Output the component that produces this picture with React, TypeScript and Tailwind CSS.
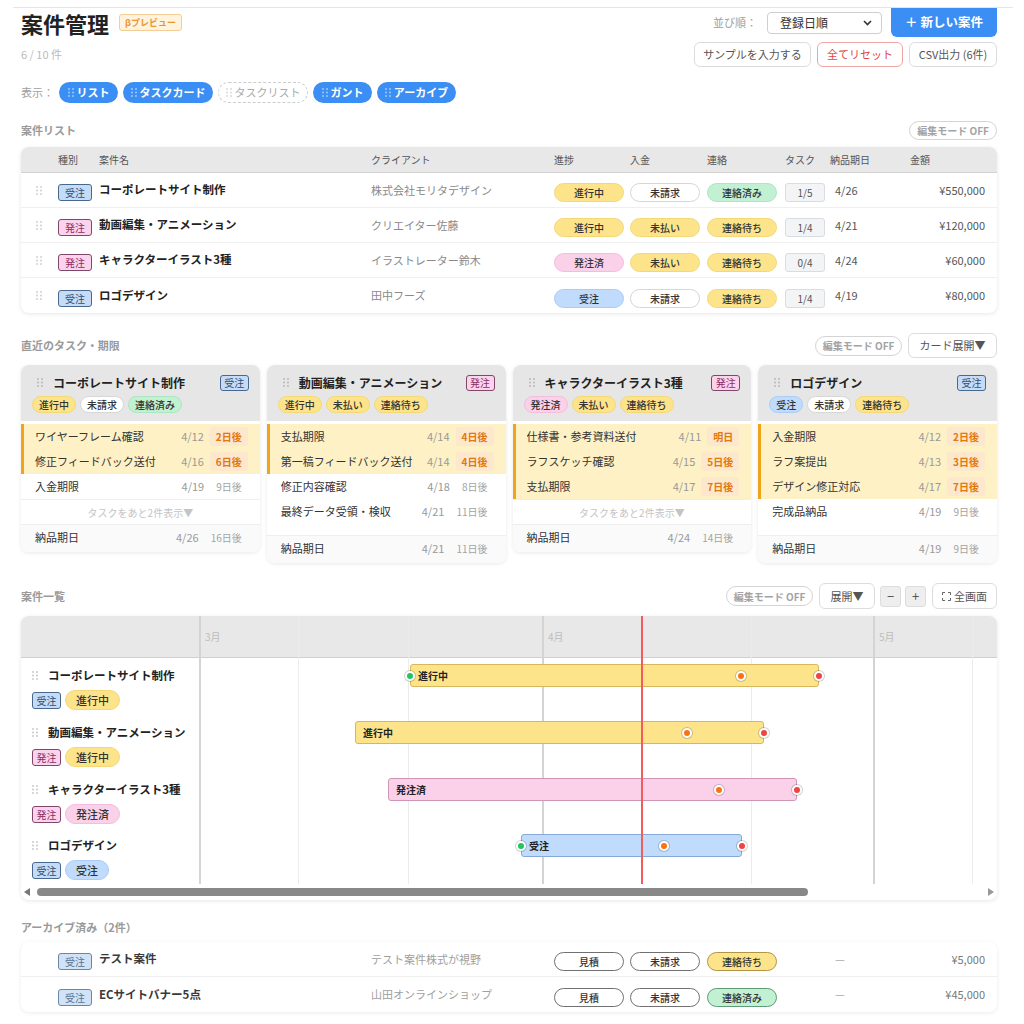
import React from "react";

type Tone = "yellow" | "white" | "green" | "pink" | "blue" | "outline" | "yellowOutline" | "greenOutline";

const TONES: Record<Tone, string> = {
  yellow: "bg-[#fde48b] border-[#f4d878]",
  white: "bg-white border-[#d6d6d6]",
  green: "bg-[#c2f0d2] border-[#ade5c1]",
  pink: "bg-[#fbd0e9] border-[#f5bddc]",
  blue: "bg-[#c0dbfb] border-[#aacdf5]",
  outline: "bg-white border-[#707070]",
  yellowOutline: "bg-[#fde48b] border-[#b09548]",
  greenOutline: "bg-[#c2f0d2] border-[#5f9a77]",
};

const BAR_TONES: Record<string, string> = {
  yellow: "bg-[#fde48b] border-[#d6b75c]",
  pink: "bg-[#fbd0e9] border-[#cf95b6]",
  blue: "bg-[#c0dbfb] border-[#86a9d6]",
};

function Grip({ className = "" }: { className?: string }) {
  return (
    <svg width="6" height="9" viewBox="0 0 6 9" className={className}>
      <g fill="currentColor">
        {[0, 1, 2].map((r) =>
          [0, 1].map((c) => <circle key={`${r}-${c}`} cx={1 + c * 4} cy={1 + r * 3.5} r="0.9" />)
        )}
      </g>
    </svg>
  );
}

function Pill({ label, tone, className = "" }: { label: string; tone: Tone; className?: string }) {
  return (
    <span
      className={`inline-flex items-center justify-center rounded-full border font-medium text-[#333] ${TONES[tone]} ${className}`}
    >
      {label}
    </span>
  );
}

function TypeBadge({ type, className = "" }: { type: string; className?: string }) {
  const tone =
    type === "受注"
      ? "bg-[#c6dcf6] border-[#47698f] text-[#2f4d73]"
      : "bg-[#fbd3ec] border-[#80476a] text-[#8b2c63]";
  return (
    <span className={`inline-flex items-center justify-center rounded-[3px] border text-[10px] ${tone} ${className}`}>
      {type}
    </span>
  );
}

function EditPill({ className = "" }: { className?: string }) {
  return (
    <span
      className={`inline-flex items-center justify-center rounded-full border border-[#d4d4d4] bg-white text-[10px] font-bold text-[#a3a3a3] ${className}`}
    >
      編集モード OFF
    </span>
  );
}

const COLS = "grid grid-cols-[37px_41px_272px_183px_76px_77px_78px_45px_80px_1fr] items-center";

const PROJECTS = [
  {
    type: "受注",
    name: "コーポレートサイト制作",
    client: "株式会社モリタデザイン",
    pills: [["進行中", "yellow"], ["未請求", "white"], ["連絡済み", "green"]] as [string, Tone][],
    task: "1/5",
    due: "4/26",
    amount: "¥550,000",
  },
  {
    type: "発注",
    name: "動画編集・アニメーション",
    client: "クリエイター佐藤",
    pills: [["進行中", "yellow"], ["未払い", "yellow"], ["連絡待ち", "yellow"]] as [string, Tone][],
    task: "1/4",
    due: "4/21",
    amount: "¥120,000",
  },
  {
    type: "発注",
    name: "キャラクターイラスト3種",
    client: "イラストレーター鈴木",
    pills: [["発注済", "pink"], ["未払い", "yellow"], ["連絡待ち", "yellow"]] as [string, Tone][],
    task: "0/4",
    due: "4/24",
    amount: "¥60,000",
  },
  {
    type: "受注",
    name: "ロゴデザイン",
    client: "田中フーズ",
    pills: [["受注", "blue"], ["未請求", "white"], ["連絡待ち", "yellow"]] as [string, Tone][],
    task: "1/4",
    due: "4/19",
    amount: "¥80,000",
  },
];

type Task = [string, string, string, boolean];

const CARDS: {
  title: string;
  type: string;
  pills: [string, Tone][];
  tasks: Task[];
  more: boolean;
  due: [string, string];
}[] = [
  {
    title: "コーポレートサイト制作",
    type: "受注",
    pills: [["進行中", "yellow"], ["未請求", "white"], ["連絡済み", "green"]],
    tasks: [
      ["ワイヤーフレーム確認", "4/12", "2日後", true],
      ["修正フィードバック送付", "4/16", "6日後", true],
      ["入金期限", "4/19", "9日後", false],
    ],
    more: true,
    due: ["4/26", "16日後"],
  },
  {
    title: "動画編集・アニメーション",
    type: "発注",
    pills: [["進行中", "yellow"], ["未払い", "yellow"], ["連絡待ち", "yellow"]],
    tasks: [
      ["支払期限", "4/14", "4日後", true],
      ["第一稿フィードバック送付", "4/14", "4日後", true],
      ["修正内容確認", "4/18", "8日後", false],
      ["最終データ受領・検収", "4/21", "11日後", false],
    ],
    more: false,
    due: ["4/21", "11日後"],
  },
  {
    title: "キャラクターイラスト3種",
    type: "発注",
    pills: [["発注済", "pink"], ["未払い", "yellow"], ["連絡待ち", "yellow"]],
    tasks: [
      ["仕様書・参考資料送付", "4/11", "明日", true],
      ["ラフスケッチ確認", "4/15", "5日後", true],
      ["支払期限", "4/17", "7日後", true],
    ],
    more: true,
    due: ["4/24", "14日後"],
  },
  {
    title: "ロゴデザイン",
    type: "受注",
    pills: [["受注", "blue"], ["未請求", "white"], ["連絡待ち", "yellow"]],
    tasks: [
      ["入金期限", "4/12", "2日後", true],
      ["ラフ案提出", "4/13", "3日後", true],
      ["デザイン修正対応", "4/17", "7日後", true],
      ["完成品納品", "4/19", "9日後", false],
    ],
    more: false,
    due: ["4/19", "9日後"],
  },
];

const GANTT = [
  { name: "コーポレートサイト制作", type: "受注", status: "進行中", tone: "yellow" as Tone, h: "h-[57px]", left: 209, width: 409, start: true, mid: 540 },
  { name: "動画編集・アニメーション", type: "発注", status: "進行中", tone: "yellow" as Tone, h: "h-[57px]", left: 154, width: 409, start: false, mid: 486 },
  { name: "キャラクターイラスト3種", type: "発注", status: "発注済", tone: "pink" as Tone, h: "h-[56px]", left: 187, width: 409, start: false, mid: 518 },
  { name: "ロゴデザイン", type: "受注", status: "受注", tone: "blue" as Tone, h: "h-[56px]", left: 320, width: 221, start: true, mid: 463 },
];

const MINOR = [97, 207, 550, 771];
const MAJOR = [341, 672];
const TODAY = 440;
const MONTHS = [
  { label: "3月", x: 4 },
  { label: "4月", x: 347 },
  { label: "5月", x: 678 },
];

function Dot({ x, color }: { x: number; color: string }) {
  return (
    <span
      className={`absolute top-[18px] z-20 h-[10px] w-[10px] -translate-x-1/2 -translate-y-1/2 rounded-full border-2 border-white shadow-[0_0_0_1px_rgba(0,0,0,0.18)] ${color}`}
      style={{ left: x }}
    />
  );
}

function TaskCard({ card }: { card: (typeof CARDS)[number] }) {
  return (
    <div className="overflow-hidden rounded-lg bg-white shadow-[0_1px_4px_rgba(0,0,0,0.09)]">
      <div className="h-[56px] bg-[#e6e6e6] pl-[11px] pr-[11px] pt-[9px]">
        <div className="flex h-[17px] items-center justify-between">
          <div className="flex items-center">
            <Grip className="ml-[5px] text-[#b5b5b5]" />
            <span className="ml-[10px] text-[12px] font-bold text-[#222]">{card.title}</span>
          </div>
          <TypeBadge type={card.type} className="h-[16px] w-[29px]" />
        </div>
        <div className="mt-[5px] flex gap-[4px]">
          {card.pills.map(([l, t]) => (
            <Pill key={l} label={l} tone={t} className="h-[17px] px-[6px] text-[10px]" />
          ))}
        </div>
      </div>
      <div className={`pt-[3px] ${card.more ? "" : "pb-[11px]"}`}>
        {card.tasks.map(([name, date, rel, hot]) => (
          <div
            key={name}
            className={`flex h-[25px] items-center border-l-[3px] pl-[11px] pr-[12px] ${
              hot ? "border-[#f0a31c] bg-[#fef1c5]" : "border-transparent"
            }`}
          >
            <span className="flex-1 truncate text-[11px] text-[#333]">{name}</span>
            <span className="text-[11px] text-[#999]">{date}</span>
            <span
              className={`ml-[6px] inline-flex h-[19px] items-center rounded-[3px] px-[6px] text-[10px] ${
                hot ? "bg-[#fde7cd] font-bold text-[#e2780e]" : "text-[#a3a3a3]"
              }`}
            >
              {rel}
            </span>
          </div>
        ))}
        {card.more && (
          <div className="flex h-[25px] items-center justify-center border-t border-[#eeeeee] text-[10px] text-[#c4c4c4]">
            タスクをあと2件表示▼
          </div>
        )}
      </div>
      <div className="flex h-[28px] items-center border-t border-[#eeeeee] bg-[#fafafa] pb-[2px] pl-[14px] pr-[12px]">
        <span className="flex-1 text-[11px] text-[#333]">納品期日</span>
        <span className="text-[11px] text-[#999]">{card.due[0]}</span>
        <span className="ml-[6px] inline-flex h-[19px] items-center px-[6px] text-[10px] text-[#a3a3a3]">
          {card.due[1]}
        </span>
      </div>
    </div>
  );
}

export default function App() {
  return (
    <div className="min-h-screen bg-white font-['Noto_Sans_CJK_JP','Noto_Sans',sans-serif]">
      <div className="ml-[13px] mr-[11px] mt-[7px] border-t border-[#e6e6e6] pl-2 pr-[16px]">
        {/* header */}
        <div className="flex items-start justify-between">
          <div className="flex h-[29px] items-center">
            <h1 className="text-[22px] font-bold leading-none text-[#222]">案件管理</h1>
            <span className="ml-[10px] inline-flex h-[17px] items-center rounded-[3px] border border-[#f3cd92] bg-[#fff3de] px-[5px] text-[9px] font-bold text-[#e8962e]">
              βプレビュー
            </span>
          </div>
          <div className="flex items-center">
            <span className="text-[11px] text-[#a0a0a0]">並び順：</span>
            <div className="ml-[10px] flex h-[22px] w-[115px] items-center justify-between rounded-[4px] border border-[#cfcfcf] pl-[12px] pr-[9px] text-[12px] text-[#333]">
              登録日順
              <svg width="9" height="6" viewBox="0 0 9 6">
                <path d="M1 1l3.5 3.5L8 1" fill="none" stroke="#333" strokeWidth="1.6" />
              </svg>
            </div>
            <button className="ml-[9px] h-[29px] w-[106px] rounded-b-md bg-[#3b8ef3] text-[12.5px] font-bold text-white">
              ＋ 新しい案件
            </button>
          </div>
        </div>

        <div className="mt-[5px] flex h-[25px] items-center justify-between">
          <span className="text-[11px] text-[#bbbbbb]">6 / 10 件</span>
          <div className="flex gap-[6px]">
            <button className="h-[25px] w-[117px] rounded-md border border-[#dcdcdc] text-[11px] text-[#555]">
              サンプルを入力する
            </button>
            <button className="h-[25px] w-[86px] rounded-md border border-[#f0a5a5] text-[11px] text-[#e04545]">
              全てリセット
            </button>
            <button className="h-[25px] w-[88px] rounded-md border border-[#dcdcdc] text-[11px] text-[#555]">
              CSV出力 (6件)
            </button>
          </div>
        </div>

        {/* view toggles */}
        <div className="mt-[15px] flex h-[21px] items-center">
          <span className="w-[38px] text-[11px] text-[#a0a0a0]">表示：</span>
          <div className="flex gap-[5px]">
            {[
              ["リスト", "w-[59px]", true],
              ["タスクカード", "w-[90px]", true],
              ["タスクリスト", "w-[90px]", false],
              ["ガント", "w-[59px]", true],
              ["アーカイブ", "w-[79px]", true],
            ].map(([label, w, on]) => (
              <span
                key={label as string}
                className={`inline-flex h-[21px] items-center justify-center gap-[3px] rounded-full text-[11px] ${w} ${
                  on
                    ? "bg-[#3b8ef3] font-bold text-white"
                    : "border border-dashed border-[#cccccc] bg-white text-[#aaaaaa]"
                }`}
              >
                <Grip className={on ? "text-[#a9cdfa]" : "text-[#d6d6d6]"} />
                {label}
              </span>
            ))}
          </div>
        </div>

        {/* 案件リスト */}
        <div className="mt-[18px] flex h-[19px] items-center justify-between">
          <span className="text-[11px] font-bold text-[#9a9a9a]">案件リスト</span>
          <EditPill className="h-[19px] w-[88px]" />
        </div>
        <div className="mt-[7px] overflow-hidden rounded-lg bg-white shadow-[0_1px_4px_rgba(0,0,0,0.1)]">
          <div className={`${COLS} h-[26px] border-b border-[#d2d2d2] bg-[#e8e8e8] text-[10px] text-[#555]`}>
            <span />
            <span>種別</span>
            <span>案件名</span>
            <span>クライアント</span>
            <span>進捗</span>
            <span>入金</span>
            <span>連絡</span>
            <span>タスク</span>
            <span>納品期日</span>
            <span>金額</span>
          </div>
          {PROJECTS.map((p, i) => (
            <div
              key={p.name}
              className={`${COLS} h-[35px] ${i < PROJECTS.length - 1 ? "border-b border-[#efefef]" : ""}`}
            >
              <span className="pl-[15px]">
                <Grip className="text-[#cccccc]" />
              </span>
              <span>
                <TypeBadge type={p.type} className="h-[17px] w-[34px]" />
              </span>
              <span className="text-[11.5px] font-bold text-[#222]">{p.name}</span>
              <span className="text-[11px] text-[#8a8a8a]">{p.client}</span>
              {p.pills.map(([l, t]) => (
                <span key={l}>
                  <Pill label={l} tone={t} className="h-[19px] w-[70px] text-[10px]" />
                </span>
              ))}
              <span>
                <span className="inline-flex h-[19px] w-[40px] items-center justify-center rounded-[3px] border border-[#d9dce0] bg-[#f3f4f6] text-[10px] text-[#555]">
                  {p.task}
                </span>
              </span>
              <span className="pl-[5px] text-[11px] text-[#555]">{p.due}</span>
              <span className="pr-3 text-right text-[11px] text-[#555]">{p.amount}</span>
            </div>
          ))}
        </div>

        {/* 直近のタスク・期限 */}
        <div className="mt-[20px] flex h-[25px] items-center justify-between">
          <span className="text-[11px] font-bold text-[#9a9a9a]">直近のタスク・期限</span>
          <div className="flex items-center gap-[6px]">
            <EditPill className="h-[20px] w-[87px]" />
            <button className="h-[25px] w-[89px] rounded-md border border-[#dcdcdc] text-[11px] text-[#555]">
              カード展開▼
            </button>
          </div>
        </div>
        <div className="mt-[7px] grid grid-cols-4 items-start gap-[7px]">
          {CARDS.map((c) => (
            <TaskCard key={c.title} card={c} />
          ))}
        </div>

        {/* 案件一覧 (gantt) */}
        <div className="mt-[20px] flex h-[26px] items-center justify-between">
          <span className="text-[11px] font-bold text-[#9a9a9a]">案件一覧</span>
          <div className="flex items-center">
            <EditPill className="h-[20px] w-[87px]" />
            <button className="ml-[6px] h-[26px] w-[56px] rounded-md border border-[#dcdcdc] text-[11px] text-[#555]">
              展開▼
            </button>
            <button className="ml-[5px] flex h-[21px] w-[21px] items-center justify-center rounded-[3px] border border-[#dddddd] bg-[#eeeeee] text-[13px] text-[#555]">
              −
            </button>
            <button className="ml-[4px] flex h-[21px] w-[21px] items-center justify-center rounded-[3px] border border-[#dddddd] bg-[#eeeeee] text-[13px] text-[#555]">
              +
            </button>
            <button className="ml-[6px] flex h-[26px] w-[65px] items-center justify-center gap-[3px] rounded-md border border-[#dcdcdc] text-[11px] text-[#555]">
              <svg width="9" height="9" viewBox="0 0 9 9" fill="none" stroke="#666" strokeWidth="1">
                <path d="M0.5 3V0.5H3M6 0.5H8.5V3M8.5 6V8.5H6M3 8.5H0.5V6" />
              </svg>
              全画面
            </button>
          </div>
        </div>
        <div className="mt-[7px] overflow-hidden rounded-lg bg-white shadow-[0_1px_4px_rgba(0,0,0,0.1)]">
          <div className="flex">
            {/* left names column */}
            <div className="w-[180px] shrink-0 border-r-2 border-[#d4d4d4]">
              <div className="h-[42px] border-b border-[#d0d0d0] bg-[#e8e8e8]" />
              {GANTT.map((g) => (
                <div key={g.name} className={`${g.h} pl-[11px] pt-[9px]`}>
                  <div className="flex h-[17px] items-center">
                    <Grip className="text-[#c4c4c4]" />
                    <span className="ml-[10px] text-[11.5px] font-bold text-[#222]">{g.name}</span>
                  </div>
                  <div className="mt-[6px] flex items-center gap-[4px]">
                    <TypeBadge type={g.type} className="h-[17px] w-[29px]" />
                    <Pill label={g.status} tone={g.tone} className="h-[20px] px-[10px] text-[11px]" />
                  </div>
                </div>
              ))}
            </div>
            {/* timeline */}
            <div className="relative flex-1">
              <div className="relative h-[42px] border-b border-[#d0d0d0] bg-[#e8e8e8]">
                {MONTHS.map((m) => (
                  <span
                    key={m.label}
                    className="absolute top-[13px] text-[10px] text-[#bdbdbd]"
                    style={{ left: m.x }}
                  >
                    {m.label}
                  </span>
                ))}
              </div>
              {MINOR.map((x) => (
                <span key={x} className="absolute inset-y-0 w-px bg-[#ececec]" style={{ left: x }} />
              ))}
              {MAJOR.map((x) => (
                <span key={x} className="absolute inset-y-0 w-[2px] bg-[#d4d4d4]" style={{ left: x }} />
              ))}
              <span className="absolute inset-y-0 z-30 w-[1.5px] bg-[#f25c5c]" style={{ left: TODAY }} />
              {GANTT.map((g) => (
                <div key={g.name} className={`relative ${g.h}`}>
                  <div
                    className={`absolute top-[6px] z-10 flex h-[23px] items-center rounded-[3px] border pl-[7px] text-[10px] font-bold text-[#222] ${BAR_TONES[g.tone]}`}
                    style={{ left: g.left, width: g.width }}
                  >
                    {g.status}
                  </div>
                  {g.start && <Dot x={g.left} color="bg-[#22c55e]" />}
                  <Dot x={g.mid} color="bg-[#f97316]" />
                  <Dot x={g.left + g.width} color="bg-[#ef4444]" />
                </div>
              ))}
            </div>
          </div>
          <div className="flex h-[16px] items-center px-[3px]">
            <svg width="6" height="8" viewBox="0 0 6 8">
              <path d="M6 0L0 4l6 4z" fill="#777" />
            </svg>
            <span className="ml-[7px] h-[8px] w-[771px] rounded-full bg-[#888888]" />
            <span className="flex-1" />
            <svg width="6" height="8" viewBox="0 0 6 8">
              <path d="M0 0l6 4-6 4z" fill="#999" />
            </svg>
          </div>
        </div>

        {/* archive */}
        <div className="mt-[17px] flex h-[20px] items-center">
          <span className="text-[11px] font-bold text-[#9a9a9a]">アーカイブ済み（2件）</span>
        </div>
        <div className="mt-[5px] overflow-hidden rounded-lg bg-white shadow-[0_1px_4px_rgba(0,0,0,0.08)]">
          {[
            {
              name: "テスト案件",
              client: "テスト案件株式が視野",
              contact: ["連絡待ち", "yellowOutline"] as [string, Tone],
              amount: "¥5,000",
            },
            {
              name: "ECサイトバナー5点",
              client: "山田オンラインショップ",
              contact: ["連絡済み", "greenOutline"] as [string, Tone],
              amount: "¥45,000",
            },
          ].map((a, i) => (
            <div key={a.name} className={`${COLS} h-[35px] ${i === 0 ? "border-b border-[#efefef]" : ""}`}>
              <span />
              <span>
                <TypeBadge type="受注" className="h-[17px] w-[34px] opacity-80" />
              </span>
              <span className="text-[11.5px] font-bold text-[#3a3a3a]">{a.name}</span>
              <span className="text-[11px] text-[#a0a0a0]">{a.client}</span>
              <span>
                <Pill label="見積" tone="outline" className="h-[19px] w-[70px] text-[10px]" />
              </span>
              <span>
                <Pill label="未請求" tone="outline" className="h-[19px] w-[70px] text-[10px]" />
              </span>
              <span>
                <Pill label={a.contact[0]} tone={a.contact[1]} className="h-[19px] w-[70px] text-[10px]" />
              </span>
              <span />
              <span className="pl-[5px] text-[11px] text-[#aaaaaa]">—</span>
              <span className="pr-3 text-right text-[11px] text-[#777]">{a.amount}</span>
            </div>
          ))}
        </div>
        <div className="h-4" />
      </div>
    </div>
  );
}
